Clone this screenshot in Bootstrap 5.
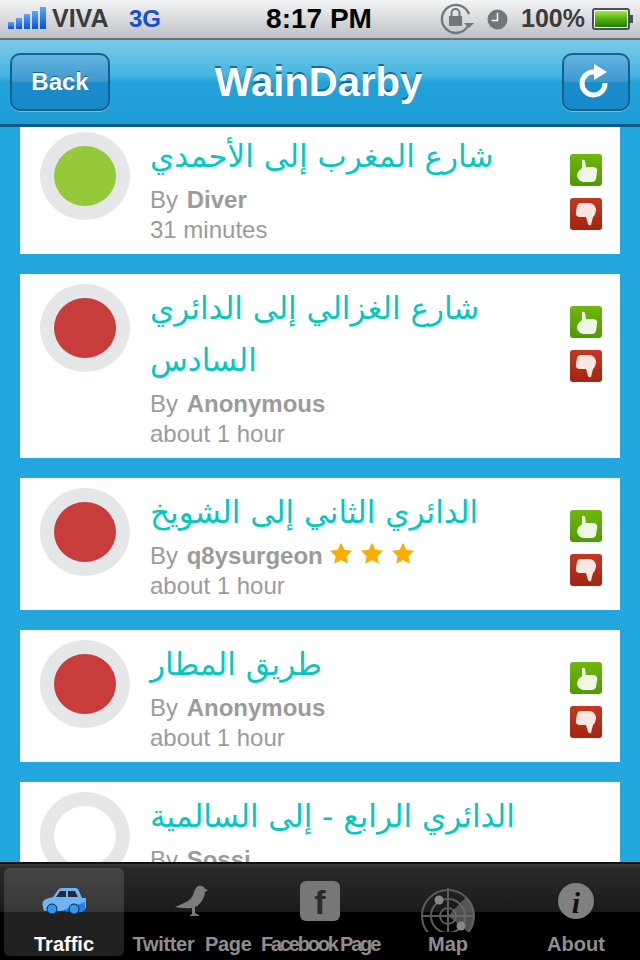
<!DOCTYPE html>
<html lang="ar">
<head>
  <meta charset="UTF-8">
  <title>WainDarby</title>
  <meta name="viewport" content="width=device-width, initial-scale=1">
  <link href="https://cdn.jsdelivr.net/npm/bootstrap@5.3.3/dist/css/bootstrap.min.css" rel="stylesheet">
  <style>
    html, body { height: 960px; overflow: hidden; }
    body { font-family: "Liberation Sans", Arial, sans-serif; background: #22a8df; }
    .app-shell { width: 640px; height: 960px; }

    .status-strip {
      height: 40px; padding: 0 6px 0 4px;
      background: linear-gradient(#f3f4f5, #bec2c5);
      border-bottom: 2px solid #6d7175;
      color: #3b3b3d; font-weight: 700; font-size: 25px;
    }
    .signal-bars { margin-left: 4px; }
    .carrier-name { margin-left: 4px; width: 77px; }
    .net-type { color: #1450d2; font-size: 24px; }
    .clock-text { color: #000; font-size: 28px; white-space: nowrap; }
    .status-left, .status-right { width: 250px; flex: 0 0 250px; }
    .icon-lock { margin-right: 12px; }
    .icon-clock { margin-right: 13px; }
    .pct-text { margin-right: 7px; }

    .title-bar {
      height: 87px; padding: 0 10px;
      background: linear-gradient(#7ccbea 0, #46b5e0 42%, #24a3da 50%, #1d9cd6 100%);
      border-bottom: 3px solid #0b5c80;
    }
    .title-side { flex: 1 1 0; }
    .title-text { color: #fff; font-size: 40px; font-weight: 700; text-shadow: 0 -2px 0 rgba(8,70,110,.7); padding-right: 3px; }
    .bar-btn {
      height: 58px; border-radius: 10px; border: 2px solid #14628f;
      background: linear-gradient(#62b4de 0, #3c98cf 50%, #1a8ccb 51%, #158aca 100%);
      box-shadow: 0 1px 0 rgba(255,255,255,.35);
      color: #fff; font-weight: 700; font-size: 24px; padding: 0;
      text-shadow: 0 -1px 0 rgba(8,70,110,.7);
    }
    .bar-btn:hover { color: #fff; }
    .back-btn { width: 100px; }
    .reload-btn { width: 68px; }

    .feed-area { height: 735px; overflow: hidden; padding: 0 20px; background: #22a8df; }
    .feed-list { margin-top: -5px; }
    .report-row { background: #fff; margin-bottom: 20px; padding: 10px 18px 9px 20px; }
    .signal-ring {
      width: 90px; height: 88px; border-radius: 50%; background: #e5e6e8;
      flex: 0 0 90px; margin-right: 20px;
    }
    .signal-dot { width: 62px; height: 60px; border-radius: 50%; }
    .dot-green { background: #96c83c; }
    .dot-red { background: #c83c3c; }
    .dot-empty { background: #fff; }
    .report-body { width: 390px; flex: 0 0 390px; }
    .road-name {
      font-family: "DejaVu Sans", sans-serif; color: #04c8c0; font-size: 31px;
      line-height: 52px; text-align: left; margin: -2px 0 3px; font-weight: 400;
    }
    .meta-line { color: #9b9b9b; font-size: 24px; line-height: 30px; white-space: nowrap; }
    .meta-line b { margin-left: 2px; }
    .vote-col { width: 32px; margin-left: auto; margin-top: 22px; gap: 12px; }
    .vote-btn { width: 32px; height: 32px; border-radius: 3px; display: block; }
    .vote-up { background: linear-gradient(#70b80c, #4f9a02); }
    .vote-down { background: linear-gradient(#c23820, #a32410); }
    .rank-star { vertical-align: -1px; }

    .tab-strip {
      height: 98px; padding: 4px 0 4px 4px;
      background: linear-gradient(#3c3c3c 0, #2a2a2a 4%, #1a1a1a 50%, #000 50%, #000 100%);
      border-top: 2px solid #111;
    }
    .tab-cell {
      width: 128px; height: 88px; border-radius: 6px; color: #8e8e8e;
      font-size: 20px; font-weight: 700; line-height: 23px; white-space: nowrap; overflow: visible;
    }
    .tab-cell.is-on { color: #fff; background: rgba(255,255,255,.13); width: 120px; margin-right: 4px; }
    .tab-icon { height: 65px; flex: 0 0 65px; }
    .tab-radar { padding-bottom: 1px; }
    .squeezed { letter-spacing: -2.2px; }
    .tighter { letter-spacing: -.3px; }
  </style>
</head>
<body>

<div class="app-shell d-flex flex-column">

  <div class="status-strip d-flex align-items-center flex-shrink-0">
    <div class="status-left d-flex align-items-center">
      <svg class="signal-bars" width="40" height="24" viewBox="0 0 40 24">
        <defs><linearGradient id="sigGrad" x1="0" y1="0" x2="0" y2="1"><stop offset="0" stop-color="#5aa6ff"/><stop offset="1" stop-color="#0a52e0"/></linearGradient></defs>
        <rect x="0" y="15" width="6" height="7" fill="url(#sigGrad)"/>
        <rect x="8" y="11" width="6" height="11" fill="url(#sigGrad)"/>
        <rect x="16" y="7" width="6" height="15" fill="url(#sigGrad)"/>
        <rect x="24" y="4" width="6" height="18" fill="url(#sigGrad)"/>
        <rect x="32" y="0" width="6" height="22" fill="url(#sigGrad)"/>
      </svg>
      <span class="carrier-name">VIVA</span>
      <span class="net-type">3G</span>
    </div>
    <div class="clock-text flex-grow-1 text-center">8:17 PM</div>
    <div class="status-right d-flex align-items-center justify-content-end">
      <svg class="icon-lock" width="36" height="34" viewBox="0 0 36 34">
        <path d="M29 24 A14 14 0 1 1 30 12" fill="none" stroke="#70777a" stroke-width="2.4"/>
        <path d="M25 21 h10 l-5 5 z" fill="#70777a"/>
        <rect x="10" y="14" width="13" height="10" fill="#70777a"/>
        <path d="M12.5 14 v-3 a4 4 0 0 1 8 0 v3" fill="none" stroke="#70777a" stroke-width="2"/>
      </svg>
      <svg class="icon-clock" width="21" height="21" viewBox="0 0 22 22">
        <circle cx="11" cy="11" r="10.5" fill="#70777a"/>
        <path d="M11 4 v8 h-6" fill="none" stroke="#fff" stroke-width="1.6"/>
      </svg>
      <span class="pct-text">100%</span>
      <svg width="42" height="22" viewBox="0 0 42 22">
        <defs><linearGradient id="batGrad" x1="0" y1="0" x2="0" y2="1"><stop offset="0" stop-color="#a8e838"/><stop offset=".5" stop-color="#4fb010"/><stop offset="1" stop-color="#2a7a08"/></linearGradient></defs>
        <rect x="1" y="1" width="36" height="20" rx="2" fill="#fff" stroke="#4a4f60" stroke-width="2"/>
        <rect x="3" y="3" width="32" height="16" fill="url(#batGrad)"/>
        <rect x="37" y="7" width="4" height="8" fill="#4a4f60"/>
      </svg>
    </div>
  </div>

  <div class="title-bar d-flex align-items-center flex-shrink-0">
    <div class="title-side d-flex">
      <button type="button" class="btn bar-btn back-btn">Back</button>
    </div>
    <div class="title-text">WainDarby</div>
    <div class="title-side d-flex justify-content-end">
      <button type="button" class="btn bar-btn reload-btn d-flex align-items-center justify-content-center">
        <svg width="34" height="38" viewBox="0 0 34 38">
          <path d="M26 20 A11.5 11.5 0 1 1 15 9" fill="none" stroke="#fff" stroke-width="5"/>
          <path d="M15 1 L28 9 L15 17 z" fill="#fff"/>
        </svg>
      </button>
    </div>
  </div>

  <div class="feed-area flex-grow-1">
    <div class="feed-list">

      <div class="report-row d-flex align-items-start">
        <div class="signal-ring d-flex align-items-center justify-content-center"><div class="signal-dot dot-green"></div></div>
        <div class="report-body">
          <h5 class="road-name">شارع المغرب إلى الأحمدي</h5>
          <div class="meta-line">By <b>Diver</b></div>
          <div class="meta-line">31 minutes</div>
        </div>
        <div class="vote-col d-flex flex-column">
          <span class="vote-btn vote-up"><svg width="32" height="32" viewBox="0 0 32 32"><path d="M12 6 q2 -1 3 1 l1 6 h8 q4 1 3 5 l-1 7 q-1 3 -4 3 h-9 q-5 -1 -6 -6 q0 -5 5 -8 z" fill="#eef6e4"/></svg></span>
          <span class="vote-btn vote-down"><svg width="32" height="32" viewBox="0 0 32 32"><path d="M21 27 q-2 1 -3 -1 l-2 -7 h-7 q-4 -1 -3 -5 l1 -6 q1 -3 4 -3 h9 q5 1 6 6 q0 5 -3 8 z" fill="#f8e6e2"/></svg></span>
        </div>
      </div>

      <div class="report-row d-flex align-items-start">
        <div class="signal-ring d-flex align-items-center justify-content-center"><div class="signal-dot dot-red"></div></div>
        <div class="report-body">
          <h5 class="road-name">شارع الغزالي إلى الدائري السادس</h5>
          <div class="meta-line">By <b>Anonymous</b></div>
          <div class="meta-line">about 1 hour</div>
        </div>
        <div class="vote-col d-flex flex-column">
          <span class="vote-btn vote-up"><svg width="32" height="32" viewBox="0 0 32 32"><path d="M12 6 q2 -1 3 1 l1 6 h8 q4 1 3 5 l-1 7 q-1 3 -4 3 h-9 q-5 -1 -6 -6 q0 -5 5 -8 z" fill="#eef6e4"/></svg></span>
          <span class="vote-btn vote-down"><svg width="32" height="32" viewBox="0 0 32 32"><path d="M21 27 q-2 1 -3 -1 l-2 -7 h-7 q-4 -1 -3 -5 l1 -6 q1 -3 4 -3 h9 q5 1 6 6 q0 5 -3 8 z" fill="#f8e6e2"/></svg></span>
        </div>
      </div>

      <div class="report-row d-flex align-items-start">
        <div class="signal-ring d-flex align-items-center justify-content-center"><div class="signal-dot dot-red"></div></div>
        <div class="report-body">
          <h5 class="road-name">الدائري الثاني إلى الشويخ</h5>
          <div class="meta-line">By <b>q8ysurgeon</b>
            <svg class="rank-star" width="24" height="24" viewBox="0 0 26 24"><path d="M13 1 l3.6 7.6 8.4 1 -6.2 5.8 1.7 8.3 -7.5 -4.2 -7.5 4.2 1.7 -8.3 -6.2 -5.8 8.4 -1 z" fill="#fdad00"/></svg>
            <svg class="rank-star" width="24" height="24" viewBox="0 0 26 24"><path d="M13 1 l3.6 7.6 8.4 1 -6.2 5.8 1.7 8.3 -7.5 -4.2 -7.5 4.2 1.7 -8.3 -6.2 -5.8 8.4 -1 z" fill="#fdad00"/></svg>
            <svg class="rank-star" width="24" height="24" viewBox="0 0 26 24"><path d="M13 1 l3.6 7.6 8.4 1 -6.2 5.8 1.7 8.3 -7.5 -4.2 -7.5 4.2 1.7 -8.3 -6.2 -5.8 8.4 -1 z" fill="#fdad00"/></svg>
          </div>
          <div class="meta-line">about 1 hour</div>
        </div>
        <div class="vote-col d-flex flex-column">
          <span class="vote-btn vote-up"><svg width="32" height="32" viewBox="0 0 32 32"><path d="M12 6 q2 -1 3 1 l1 6 h8 q4 1 3 5 l-1 7 q-1 3 -4 3 h-9 q-5 -1 -6 -6 q0 -5 5 -8 z" fill="#eef6e4"/></svg></span>
          <span class="vote-btn vote-down"><svg width="32" height="32" viewBox="0 0 32 32"><path d="M21 27 q-2 1 -3 -1 l-2 -7 h-7 q-4 -1 -3 -5 l1 -6 q1 -3 4 -3 h9 q5 1 6 6 q0 5 -3 8 z" fill="#f8e6e2"/></svg></span>
        </div>
      </div>

      <div class="report-row d-flex align-items-start">
        <div class="signal-ring d-flex align-items-center justify-content-center"><div class="signal-dot dot-red"></div></div>
        <div class="report-body">
          <h5 class="road-name">طريق المطار</h5>
          <div class="meta-line">By <b>Anonymous</b></div>
          <div class="meta-line">about 1 hour</div>
        </div>
        <div class="vote-col d-flex flex-column">
          <span class="vote-btn vote-up"><svg width="32" height="32" viewBox="0 0 32 32"><path d="M12 6 q2 -1 3 1 l1 6 h8 q4 1 3 5 l-1 7 q-1 3 -4 3 h-9 q-5 -1 -6 -6 q0 -5 5 -8 z" fill="#eef6e4"/></svg></span>
          <span class="vote-btn vote-down"><svg width="32" height="32" viewBox="0 0 32 32"><path d="M21 27 q-2 1 -3 -1 l-2 -7 h-7 q-4 -1 -3 -5 l1 -6 q1 -3 4 -3 h9 q5 1 6 6 q0 5 -3 8 z" fill="#f8e6e2"/></svg></span>
        </div>
      </div>

      <div class="report-row d-flex align-items-start">
        <div class="signal-ring d-flex align-items-center justify-content-center"><div class="signal-dot dot-empty"></div></div>
        <div class="report-body">
          <h5 class="road-name">الدائري الرابع - إلى السالمية</h5>
          <div class="meta-line">By <b>Sossi</b></div>
        </div>
      </div>

    </div>
  </div>

  <div class="tab-strip d-flex flex-shrink-0">
    <div class="tab-cell is-on d-flex flex-column align-items-center">
      <div class="tab-icon d-flex align-items-center">
        <svg width="46" height="30" viewBox="0 0 46 30">
          <path d="M2 21 q-2 -6 3 -8 l7 -2 l5 -7 q1 -2 4 -2 h13 q3 0 4 3 l3 7 h4 v9 q-1 4 -4 4 h-36 q-3 0 -3 -4 z" fill="#6fb4f6"/>
          <path d="M15 11 l4 -6 h6 v6 z M27 5 h7 l3 6 h-10 z" fill="#2a2a2a"/>
          <path d="M20 25 l24 -9 v6 q-1 4 -4 4 z" fill="#1f7ff0"/>
          <circle cx="11" cy="23" r="5" fill="#2a9cf5" stroke="#222" stroke-width="1"/>
          <circle cx="33" cy="23" r="5" fill="#2a9cf5" stroke="#222" stroke-width="1"/>
        </svg>
      </div>
      <span>Traffic</span>
    </div>
    <div class="tab-cell d-flex flex-column align-items-center">
      <div class="tab-icon d-flex align-items-center">
        <svg width="34" height="32" viewBox="0 0 34 32">
          <path d="M23 1 q5 -1 7 3 l3 1 l-3 2 q-1 9 -8 14 l-2 1 v6 l4 2 v1 h-9 v-1 l2 -1 v-6 q-7 1 -17 -1 l9 -4 q6 -2 9 -8 q2 -7 5 -9 z" fill="#7c7c7c"/>
        </svg>
      </div>
      <span class="tighter">Twitter&nbsp;&nbsp;Page</span>
    </div>
    <div class="tab-cell d-flex flex-column align-items-center">
      <div class="tab-icon d-flex align-items-center">
        <svg width="40" height="40" viewBox="0 0 40 40">
          <rect width="40" height="40" rx="6" fill="#777"/>
          <text x="20" y="33" text-anchor="middle" font-family="Liberation Sans, sans-serif" font-weight="700" font-size="34" fill="#2a2a2a">f</text>
        </svg>
      </div>
      <span class="squeezed">Facebook Page</span>
    </div>
    <div class="tab-cell d-flex flex-column align-items-center">
      <div class="tab-icon tab-radar d-flex align-items-end">
        <svg width="54" height="44" viewBox="0 0 54 44">
          <g fill="none" stroke="#5c5c5c" stroke-width="2">
            <circle cx="27" cy="28" r="26"/><circle cx="27" cy="28" r="17"/><circle cx="27" cy="28" r="8"/>
            <path d="M27 0 v46 M0 28 h54"/>
          </g>
          <path d="M27 28 L45 9 A26 26 0 0 1 47 44 Z" fill="#6a6a6a" opacity=".75"/>
          <circle cx="18" cy="12" r="4.5" fill="#888"/>
          <circle cx="40" cy="38" r="4.5" fill="#888"/>
        </svg>
      </div>
      <span>Map</span>
    </div>
    <div class="tab-cell d-flex flex-column align-items-center">
      <div class="tab-icon d-flex align-items-center">
        <svg width="36" height="36" viewBox="0 0 36 36">
          <circle cx="18" cy="18" r="18" fill="#808080"/>
          <text x="18" y="30" text-anchor="middle" font-family="Liberation Serif, serif" font-style="italic" font-weight="700" font-size="30" fill="#111">i</text>
        </svg>
      </div>
      <span>About</span>
    </div>
  </div>

</div>

<script src="https://cdn.jsdelivr.net/npm/bootstrap@5.3.3/dist/js/bootstrap.bundle.min.js"></script>
</body>
</html>
